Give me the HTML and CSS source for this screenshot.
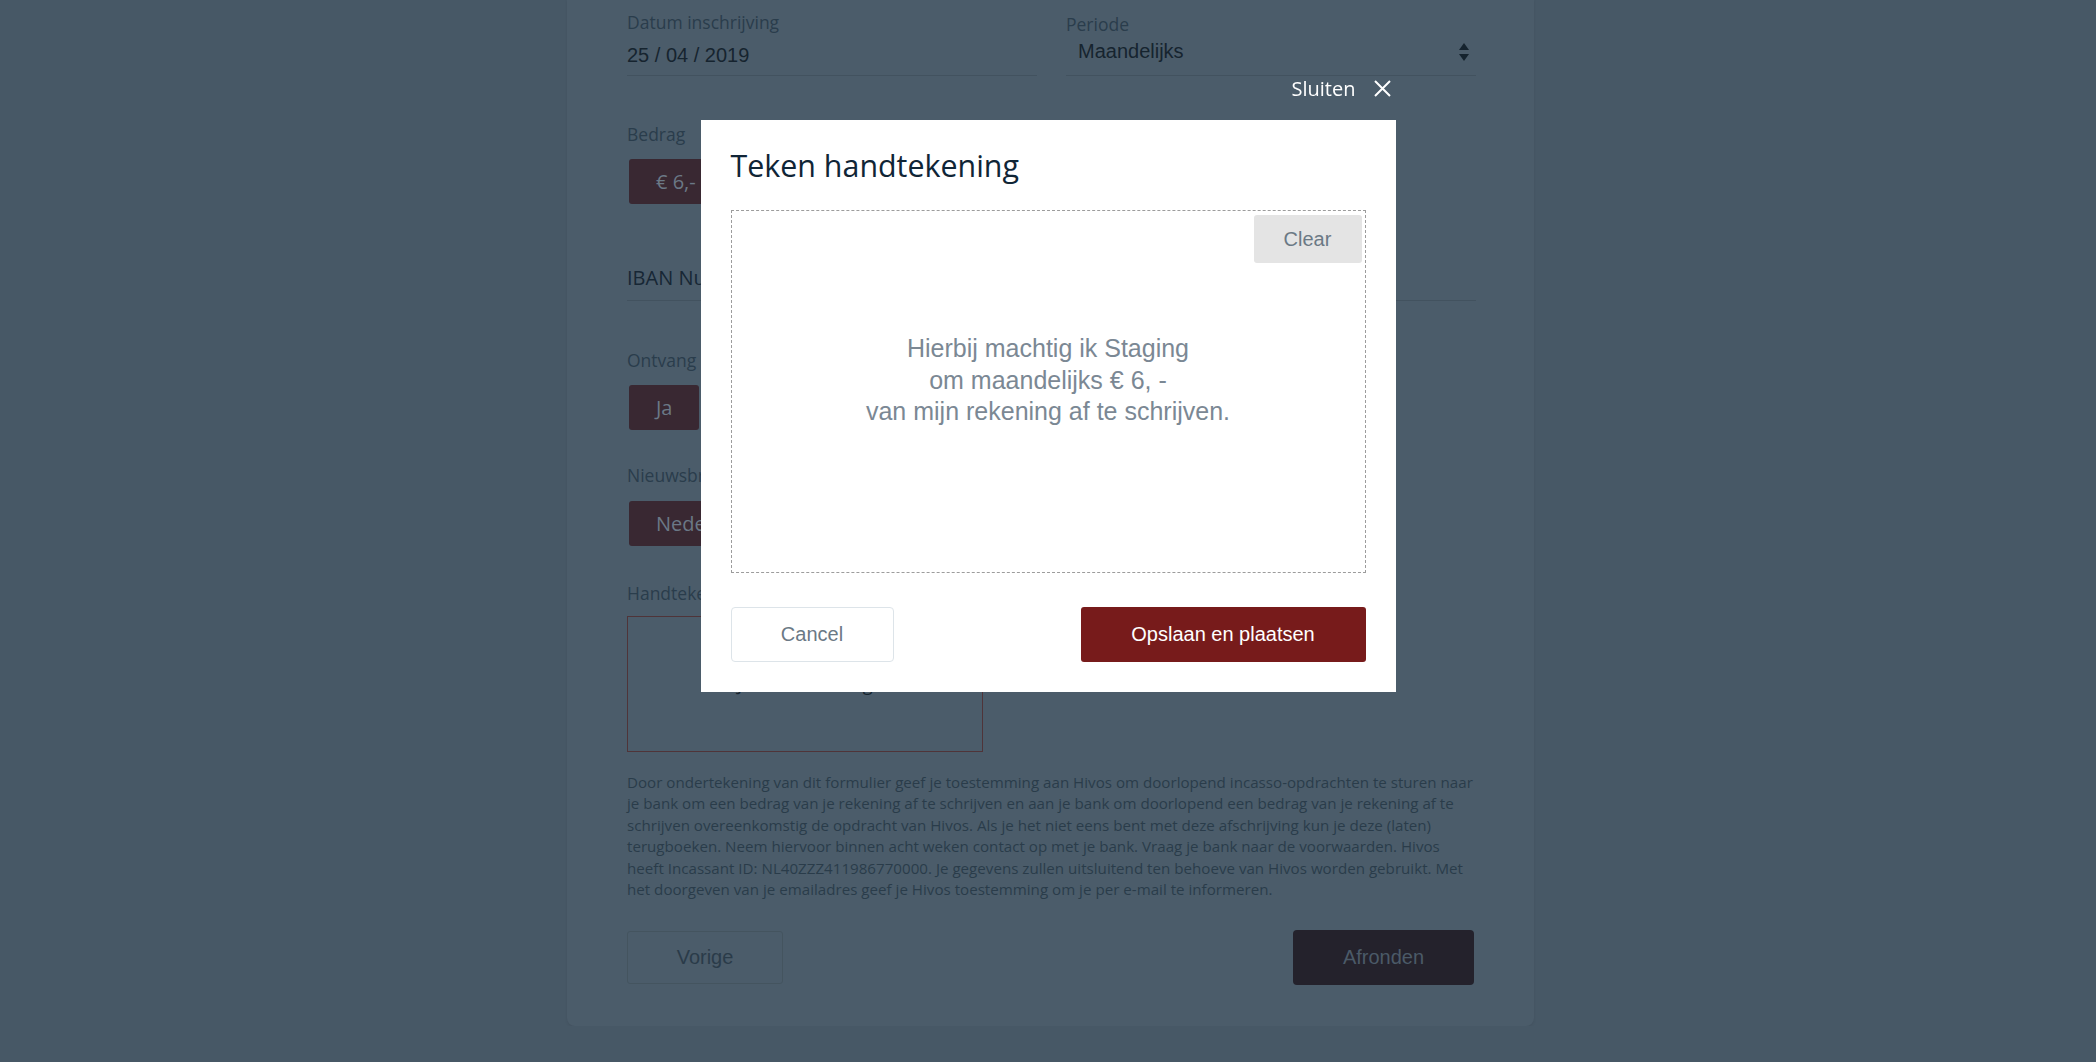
FILE: index.html
```html
<!DOCTYPE html>
<html lang="nl">
<head>
<meta charset="utf-8">
<title>Teken handtekening</title>
<link rel="stylesheet" href="styles.css">
</head>
<body>
<div class="page">
  <main class="card">
    <div class="grid2">
      <div class="field">
        <label class="label">Datum inschrijving</label>
        <div class="value">25 / 04 / 2019</div>
      </div>
      <div class="field field-select">
        <label class="label">Periode</label>
        <div class="select">
          <span>Maandelijks</span>
          <svg class="select-arrows" width="10" height="18" viewBox="0 0 10 18"><polygon points="5,0 10,7 0,7"/><polygon points="0,11 10,11 5,18"/></svg>
        </div>
      </div>
    </div>

    <div class="field bedrag">
      <label class="label">Bedrag</label>
      <div class="choices">
        <button class="choice">€ 6,-</button>
      </div>
    </div>

    <div class="iban">IBAN Nummer</div>

    <div class="field gap48">
      <label class="label">Ontvang bedankbrief</label>
      <div class="choices">
        <button class="choice">Ja</button>
        <button class="choice">Nee</button>
      </div>
    </div>

    <div class="field gap34">
      <label class="label">Nieuwsbrief taal</label>
      <div class="choices choices-14">
        <button class="choice">Nederlands</button>
        <button class="choice">English</button>
      </div>
    </div>

    <div class="field gap36">
      <label class="label">Handtekening</label>
      <div class="sign-box"><span>Je handtekening</span></div>
    </div>

    <p class="disclaimer">Door ondertekening van dit formulier geef je toestemming aan Hivos om doorlopend incasso-opdrachten te sturen naar je bank om een bedrag van je rekening af te schrijven en aan je bank om doorlopend een bedrag van je rekening af te schrijven overeenkomstig de opdracht van Hivos. Als je het niet eens bent met deze afschrijving kun je deze (laten) terugboeken. Neem hiervoor binnen acht weken contact op met je bank. Vraag je bank naar de voorwaarden. Hivos heeft Incassant ID: NL40ZZZ411986770000. Je gegevens zullen uitsluitend ten behoeve van Hivos worden gebruikt. Met het doorgeven van je emailadres geef je Hivos toestemming om je per e-mail te informeren.</p>

    <div class="actions">
      <button class="btn-prev">Vorige</button>
      <button class="btn-finish">Afronden</button>
    </div>
  </main>
</div>

<div class="backdrop">
  <div class="modal">
    <button class="close">Sluiten
      <svg width="17" height="17" viewBox="0 0 17 17"><path d="M1 1 L16 16 M16 1 L1 16" stroke="#fff" stroke-width="2" fill="none"/></svg>
    </button>
    <h2 class="modal-title">Teken handtekening</h2>
    <div class="pad">
      <button class="clear">Clear</button>
      <p class="mandate">Hierbij machtig ik Staging<br>om maandelijks € 6, -<br>van mijn rekening af te schrijven.</p>
    </div>
    <div class="modal-actions">
      <button class="btn-cancel">Cancel</button>
      <button class="btn-save">Opslaan en plaatsen</button>
    </div>
  </div>
</div>
</body>
</html>
```

FILE: styles.css
```css
* { box-sizing: border-box; }

body {
  margin: 0;
  background: #475866;
  font-family: "Open Sans", "DejaVu Sans", sans-serif;
}

button { cursor: pointer; }

.page {
  display: flex;
  justify-content: center;
  padding-left: 5px;
}

.card {
  width: 967px;
  padding: 11px 58px 41px 60px;
  background: #4b5c6a;
  border-radius: 0 0 8px 8px;
  box-shadow: 0 1px 3px rgba(0, 0, 0, 0.08);
}

.grid2 {
  display: grid;
  grid-template-columns: 1fr 1fr;
  column-gap: 29px;
}

.label {
  display: block;
  font-size: 17.5px;
  line-height: 23px;
  color: #2a3d4c;
  white-space: nowrap;
}

.value {
  margin-top: 10px;
  padding-bottom: 8px;
  border-bottom: 1px solid #42525f;
  font-family: "Liberation Sans", Arial, sans-serif;
  font-size: 20px;
  line-height: 23px;
  color: #16242f;
}

.field-select .label { padding-top: 2px; }

.select {
  margin-top: 4px;
  display: flex;
  justify-content: space-between;
  align-items: center;
  padding: 0 7px 12px 12px;
  border-bottom: 1px solid #42525f;
  font-family: "Liberation Sans", Arial, sans-serif;
  font-size: 20px;
  line-height: 23px;
  color: #16242f;
}

.select-arrows { fill: #15232e; }

.bedrag { margin-top: 47px; }
.gap48 { margin-top: 48px; }
.gap34 { margin-top: 34px; }
.gap36 { margin-top: 36px; }

.choices {
  display: flex;
  gap: 10px;
  margin-top: 13px;
  padding-left: 2px;
}
.choices-14 { margin-top: 14px; }

.choice {
  height: 45px;
  padding: 0 27px;
  border: none;
  border-radius: 3px;
  background: #392832;
  color: #6b7886;
  font-family: "Open Sans", sans-serif;
  font-size: 20px;
}

.iban {
  margin-top: 60px;
  padding-bottom: 9px;
  border-bottom: 1px solid #42525f;
  font-size: 20px;
  line-height: 27px;
  color: #172735;
}

.sign-box {
  margin-top: 11px;
  width: 356px;
  height: 136px;
  border: 1px solid #4f3439;
  display: flex;
  align-items: center;
  justify-content: center;
  font-size: 18px;
  line-height: 27px;
  color: #15242f;
}

.disclaimer {
  margin: 20px 0 0;
  font-size: 15.15px;
  line-height: 21.4px;
  color: #2a3c4a;
}

.actions {
  margin-top: 30px;
  height: 55px;
  display: flex;
  justify-content: space-between;
  align-items: center;
}

.btn-prev {
  width: 156px;
  height: 53px;
  border: 1px solid #44545f;
  border-radius: 3px;
  background: transparent;
  color: #2a3b49;
  font-family: "Liberation Sans", Arial, sans-serif;
  font-size: 20px;
}

.btn-finish {
  width: 181px;
  height: 55px;
  margin-right: 2px;
  border: none;
  border-radius: 4px;
  background: #24222c;
  color: #4b5a68;
  font-family: "Liberation Sans", Arial, sans-serif;
  font-size: 20px;
}

/* Modal */
.backdrop {
  position: fixed;
  inset: 0;
  display: flex;
  justify-content: center;
  align-items: flex-start;
  padding-top: 120px;
}

.modal {
  position: relative;
  width: 695px;
  padding: 26px 30px 30px;
  background: #fff;
}

.close {
  position: absolute;
  top: -45px;
  right: 5px;
  display: flex;
  align-items: center;
  gap: 18px;
  padding: 0;
  border: 0;
  background: none;
  color: #fff;
  font-family: "Open Sans", sans-serif;
  font-size: 20px;
  line-height: 27px;
}

.modal-title {
  margin: 0 0 24px;
  font-size: 30.4px;
  line-height: 40px;
  font-weight: 400;
  color: #102536;
}

.pad {
  position: relative;
  height: 363px;
  border: 1px dashed #9c9c9c;
}

.clear {
  position: absolute;
  top: 4px;
  right: 3px;
  width: 108px;
  height: 48px;
  border: none;
  border-radius: 3px;
  background: #e4e4e4;
  color: #6b7985;
  font-family: "Liberation Sans", Arial, sans-serif;
  font-size: 20px;
}

.mandate {
  margin: 0;
  padding-top: 122px;
  text-align: center;
  font-family: "Liberation Sans", Arial, sans-serif;
  font-size: 25px;
  line-height: 31.5px;
  color: #7b8894;
}

.modal-actions {
  margin-top: 34px;
  display: flex;
  justify-content: space-between;
}

.btn-cancel {
  width: 163px;
  height: 55px;
  border: 1px solid #dde4e9;
  border-radius: 4px;
  background: #fff;
  color: #6b7985;
  font-family: "Liberation Sans", Arial, sans-serif;
  font-size: 20px;
}

.btn-save {
  width: 285px;
  height: 55px;
  border: none;
  border-radius: 3px;
  background: #771b1b;
  color: #fff;
  font-family: "Liberation Sans", Arial, sans-serif;
  font-size: 20px;
}
```
